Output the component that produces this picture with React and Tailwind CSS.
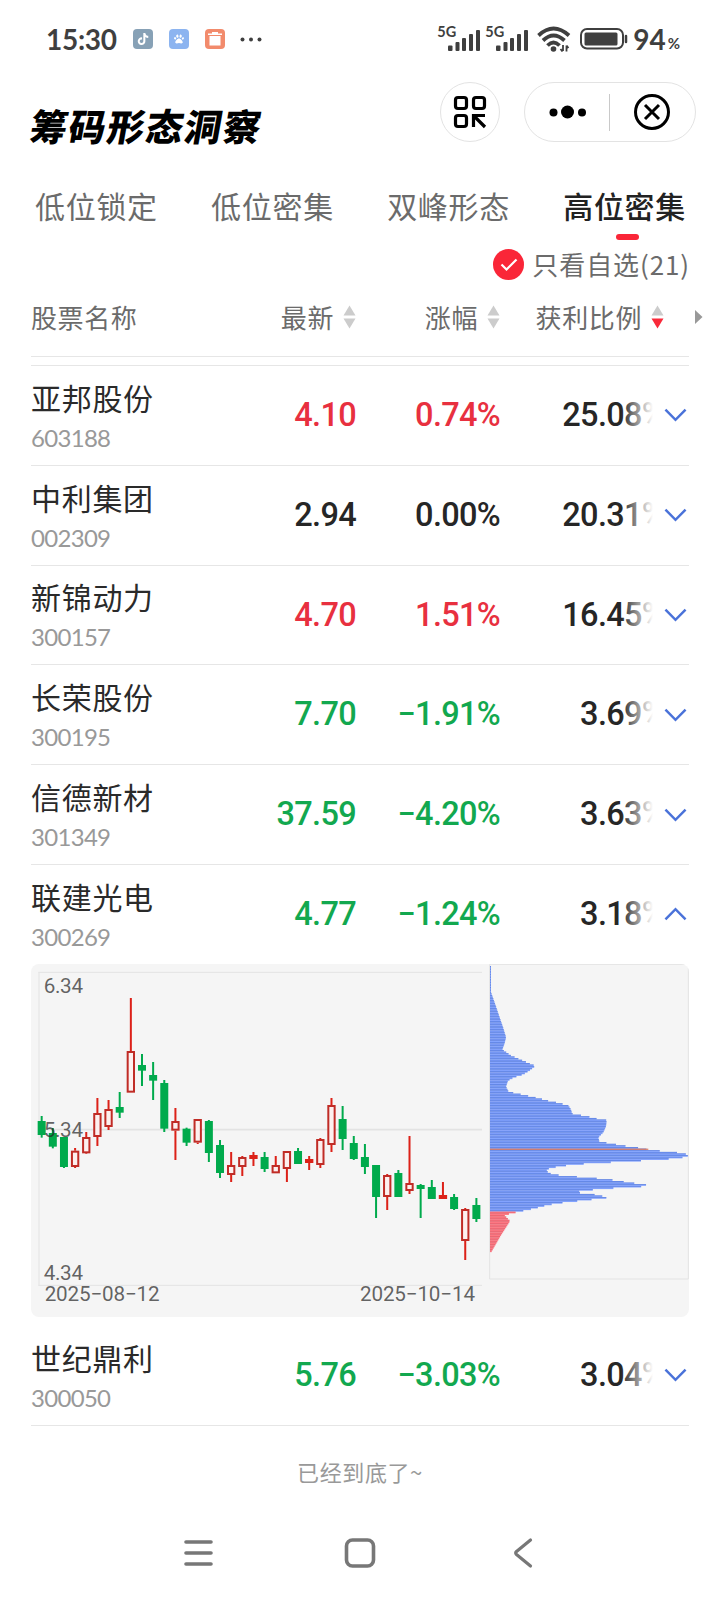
import React from "react";
import { FaPaw } from "react-icons/fa";
import { FaTiktok } from "react-icons/fa6";

const tabs = ["低位锁定", "低位密集", "双峰形态", "高位密集"];

const columns = [
  { label: "最新", width: "w-[189px]" },
  { label: "涨幅", width: "w-[144px]" },
  { label: "获利比例", width: "w-[164px]", sorted: true },
];

const stocks = [
  { name: "亚邦股份", code: "603188", price: "4.10", change: "0.74%", profit: "25.08%", tone: "up" },
  { name: "中利集团", code: "002309", price: "2.94", change: "0.00%", profit: "20.31%", tone: "flat" },
  { name: "新锦动力", code: "300157", price: "4.70", change: "1.51%", profit: "16.45%", tone: "up" },
  { name: "长荣股份", code: "300195", price: "7.70", change: "−1.91%", profit: "3.69%", tone: "down" },
  { name: "信德新材", code: "301349", price: "37.59", change: "−4.20%", profit: "3.63%", tone: "down" },
  { name: "联建光电", code: "300269", price: "4.77", change: "−1.24%", profit: "3.18%", tone: "down", open: true },
  { name: "世纪鼎利", code: "300050", price: "5.76", change: "−3.03%", profit: "3.04%", tone: "down" },
];

const tones = {
  up: "text-[#e8303f]",
  flat: "text-[#262626]",
  down: "text-[#12a84f]",
};

// [direction, high, body top, body bottom, low], three units to a pixel
const candles = [
  ["g", 483, 498, 540, 548], ["g", 519, 534, 575, 580], ["g", 546, 546, 636, 639], ["r", 579, 587, 636, 639],
  ["r", 531, 546, 595, 597], ["r", 429, 474, 546, 573], ["r", 435, 462, 516, 525], ["g", 411, 456, 473, 489],
  ["r", 129, 288, 413, 413], ["g", 297, 330, 347, 393], ["g", 321, 360, 377, 435], ["g", 375, 384, 521, 531],
  ["r", 459, 498, 527, 615], ["g", 518, 521, 563, 573], ["r", 492, 492, 563, 567], ["g", 495, 498, 594, 621],
  ["g", 555, 570, 654, 669], ["r", 591, 630, 660, 681], ["r", 603, 606, 636, 663], ["r", 591, 600, 612, 633],
  ["g", 591, 606, 642, 651], ["r", 603, 630, 655, 655], ["r", 588, 588, 642, 681], ["g", 579, 588, 627, 627],
  ["r", 603, 612, 624, 645], ["r", 549, 552, 630, 639], ["r", 429, 450, 570, 591], ["g", 453, 492, 552, 585],
  ["g", 543, 564, 612, 615], ["g", 567, 606, 636, 657], ["g", 630, 630, 726, 789], ["r", 657, 660, 726, 765],
  ["g", 645, 654, 726, 726], ["r", 543, 684, 708, 717], ["g", 687, 690, 702, 789], ["g", 675, 696, 732, 732],
  ["r", 681, 720, 732, 732], ["g", 717, 726, 762, 765], ["r", 759, 762, 858, 915], ["g", 729, 750, 792, 801],
];

// outline of the chip distribution: [y, bar length]
const outline = [
  [33, 3], [110, 3], [150, 17], [180, 27], [215, 39], [245, 48], [262, 44], [282, 37], [300, 63], [315, 98],
  [331, 136], [345, 118], [357, 98], [365, 72], [375, 54], [393, 48], [407, 55], [412, 72], [417, 96], [422, 119],
  [427, 142], [436, 176], [442, 206], [450, 235], [462, 243], [474, 246], [479, 272], [484, 298], [489, 320],
  [494, 350], [512, 348], [530, 340], [545, 325], [558, 328], [563, 357], [568, 387], [573, 416], [578, 460],
  [583, 475], [588, 534], [593, 583], [600, 595], [606, 575], [611, 528], [616, 434], [621, 341], [626, 260],
  [631, 215], [638, 178], [646, 168], [656, 186], [660, 216], [664, 267], [669, 328], [674, 375], [679, 407],
  [684, 440], [688, 470], [693, 452], [698, 360], [703, 300], [708, 261], [712, 270], [717, 315], [721, 334],
  [726, 354], [731, 308], [736, 264], [741, 218], [747, 178], [753, 154], [759, 130], [764, 106], [769, 83],
  [773, 62], [780, 44], [796, 60], [840, 32], [892, 2],
];

function lengthAt(y) {
  const i = outline.findIndex(([py]) => py >= y);
  if (i <= 0) return outline[0][1];
  const [y0, w0] = outline[i - 1];
  const [y1, w1] = outline[i];
  return w0 + ((w1 - w0) * (y - y0)) / (y1 - y0);
}

const bars = Array.from({ length: 177 }, (_, i) => {
  const y = 33 + i * 4.85;
  return { y, length: lengthAt(y) };
});

function StatusBar() {
  return (
    <div className="flex h-[78px] items-center pl-[46px] pr-[40px] font-['Lato',sans-serif] font-bold text-[#3f3f3f]">
      <span className="w-[71px] text-[28px] leading-none tracking-[-0.3px]">15:30</span>
      <span className="ml-4 flex size-5 items-center justify-center rounded bg-[#87a1b6] text-white">
        <FaTiktok size={12} />
      </span>
      <span className="ml-4 flex size-5 items-center justify-center rounded bg-[#8cb4f0] text-white">
        <FaPaw size={10} />
      </span>
      <span className="ml-4 flex size-5 items-center justify-center rounded bg-[#f28b6c]">
        <svg width="14" height="14" viewBox="0 0 14 14" fill="#fff">
          <path d="M4 0h6v1.5h4V3H0V1.5h4zM1.5 4h11v9.5h-11z" />
        </svg>
      </span>
      <svg className="ml-[15px]" width="23" height="5" viewBox="0 0 23 5" fill="#3f3f3f">
        <circle cx="2.5" cy="2.5" r="2" />
        <circle cx="11" cy="2.5" r="2" />
        <circle cx="19.5" cy="2.5" r="2" />
      </svg>
      <div className="ml-auto flex items-center">
        <Signal />
        <Signal />
        <svg className="ml-[4px]" width="34" height="26" viewBox="0 0 34 26" fill="none" stroke="#3f3f3f" strokeWidth="3.8">
          <path d="M1.5 9.5Q16.5 -4.5 32 9.5" />
          <path d="M6 14.5Q16.5 4.5 27.5 14.5" />
          <path d="M10.5 19.500Q16.5 13.500 22.5 19.500" />
          <circle cx="16.5" cy="23" r="2.8" fill="#3f3f3f" stroke="none" />
          <path d="M26 19v6M23.5 23l2 2.5M29.5 25.500v-6M31.5 22l-2-2.5" strokeWidth="1.8" />
        </svg>
        <svg className="ml-[9px]" width="48" height="22" viewBox="0 0 48 22" fill="none">
          <rect x="1" y="1" width="42" height="19.5" rx="6" stroke="#3f3f3f" strokeWidth="2" />
          <rect x="4.5" y="4.5" width="33" height="13" rx="1.5" fill="#3f3f3f" />
          <path d="M46 8v6" stroke="#3f3f3f" strokeWidth="2.5" strokeLinecap="round" />
        </svg>
        <span className="ml-[5px] text-[28px] leading-none">94</span>
        <span className="ml-[2px] pt-[8px] text-[15px] leading-none">%</span>
      </div>
    </div>
  );
}

function Signal() {
  return (
    <div className="flex w-[48px] items-start">
      <span className="w-[11px] text-[14.5px] leading-[8px]">5G</span>
      <svg className="mt-[2px]" width="33" height="21" viewBox="0 0 33 21" fill="#3f3f3f">
        <rect x="0" y="15.5" width="4.5" height="5.5" rx="1" />
        <rect x="7.5" y="12" width="4" height="9" rx="1" />
        <rect x="14" y="8" width="4" height="13" rx="1" />
        <rect x="21" y="4" width="4" height="17" rx="1" />
        <rect x="28" y="0" width="4" height="21" rx="1" />
      </svg>
    </div>
  );
}

function TitleBar() {
  return (
    <header className="flex h-[96px] items-start pl-[31px] pr-[24px]">
      <h1 className="mt-[24px] -skew-x-10 text-[37px] font-black leading-[46px] tracking-[1.6px] text-black">
        筹码形态洞察
      </h1>
      <div className="ml-auto mt-1 flex size-[60px] items-center justify-center rounded-full border border-[#e3e3e3]">
        <svg width="34" height="34" viewBox="0 0 34 34" fill="none" stroke="#000" strokeWidth="3.2">
          <rect x="2.5" y="2.5" width="11" height="11" rx="2.5" />
          <rect x="20.5" y="2.5" width="11" height="11" rx="2.5" />
          <rect x="2.5" y="20.5" width="11" height="11" rx="2.5" />
          <path d="M32 20.5H20.5V32M21 21l11 11" />
        </svg>
      </div>
      <div className="ml-6 mt-1 flex h-[60px] w-[172px] items-center rounded-full border border-[#e3e3e3]">
        <svg className="ml-6" width="38" height="14" viewBox="0 0 38 14">
          <circle cx="4.5" cy="7.5" r="4" />
          <circle cx="18.5" cy="7" r="6.5" />
          <circle cx="33" cy="7.5" r="4" />
        </svg>
        <div className="ml-[22px] h-[37px] w-px bg-[#c9c9c9]" />
        <svg className="ml-6" width="36" height="36" viewBox="0 0 36 36" fill="none" stroke="#000" strokeWidth="3">
          <circle cx="18" cy="18" r="16.5" />
          <path d="M11 11l14 14M25 11L11 25" />
        </svg>
      </div>
    </header>
  );
}

function SortArrows({ sorted }) {
  return (
    <svg width="13" height="24" viewBox="0 0 13 24">
      <path d="M6.5 0.5L12.5 10.5H0.5z" fill="#cccccc" />
      <path d="M6.5 23.5L12.5 13.5H0.5z" fill={sorted ? "#f92a3a" : "#cccccc"} />
    </svg>
  );
}

function StockRow({ stock }) {
  const last = stock.code === "300050";
  return (
    <div
      className={`flex items-center ${stock.open ? "h-[98.8px]" : "h-[99.8px] border-b border-[#e6e6e6]"} ${last ? "mt-[9px]" : ""}`}
    >
      <div className="w-[160px]">
        <div className="text-[30px] leading-[36px] tracking-[0.7px] text-[#2a2a2a]">{stock.name}</div>
        <div className="mt-[9px] font-['Lato',sans-serif] text-[24px] leading-[28px] tracking-[-0.7px] text-[#999999]">
          {stock.code}
        </div>
      </div>
      <div className="flex flex-1 items-center font-['Roboto',sans-serif] text-[32.5px] font-medium tracking-[-0.7px]">
        <span className={`w-[165px] text-right ${tones[stock.tone]}`}>{stock.price}</span>
        <span className={`w-[144px] text-right ${tones[stock.tone]}`}>{stock.change}</span>
        <div className="relative ml-auto flex h-10 w-[118px] items-center justify-end text-[#262626]">
          <span>{stock.profit}</span>
          <span className="absolute inset-y-0 right-[12px] w-[32px] bg-linear-to-r from-white/0 to-white" />
          <span className="absolute inset-y-0 -right-1 w-[16px] bg-white" />
        </div>
        <svg
          className="relative mr-[2px] -ml-[1px]"
          width="23"
          height="14"
          viewBox="0 0 24 14"
          fill="none"
          stroke="#4a72d9"
          strokeWidth="2.6"
        >
          <path d={stock.open ? "M1.5 12.5L12 2l10.5 10.5" : "M1.5 1.5L12 12 22.5 1.5"} />
        </svg>
      </div>
    </div>
  );
}

function Candle({ index, data }) {
  const [dir, high, top, bottom, low] = data;
  const x = 65 + index * 33.44;
  if (dir === "g") {
    return (
      <g fill="#00aa4c">
        <rect x={x - 3} y={high} width="6" height={low - high} />
        <rect x={x - 12} y={top} width="24" height={bottom - top} />
      </g>
    );
  }
  const hollow = bottom - top > 14;
  return (
    <g>
      <g fill="#dc2118">
        <rect x={x - 3} y={high} width="6" height={top - high} />
        <rect x={x - 3} y={bottom} width="6" height={low - bottom} />
      </g>
      <rect
        x={x - 9.5}
        y={top + 3}
        width="19"
        height={Math.max(bottom - top - 6, 1)}
        fill={hollow ? "#fdf0ef" : "#dc2118"}
        stroke={hollow ? "#c02c26" : "#dc2118"}
        strokeWidth="6"
      />
    </g>
  );
}

function ChipChart() {
  return (
    <svg
      className="block h-[353px] w-full rounded-lg bg-[#f5f5f5] font-['Roboto',sans-serif]"
      viewBox="33 27 1974 1059"
      preserveAspectRatio="none"
    >
      <g fill="none" stroke="#e3e3e3" strokeWidth="3">
        <path d="M55 52H1386M57 52V991M55 991H1386" />
        <path d="M55 524H1386" strokeWidth="5" />
        <path d="M1409 28H2005V972H1409z" />
      </g>
      {candles.map((data, i) => (
        <Candle key={i} index={i} data={data} />
      ))}
      {bars.map(({ y, length }) => (
        <g key={y}>
          <rect x="1410" y={y} width={length} height="4.85" fill={y > 769 ? "#ff7883" : "#85a4ff"} />
          <rect x="1410" y={y} width={length} height="1.8" fill={y > 769 ? "#dd5c68" : "#4f76d8"} />
        </g>
      ))}
      <rect x="1410" y="581" width="475" height="3.5" fill="#e07a5a" />
      <g fill="#222222" fillOpacity="0.7" fontSize="62">
        <text x="71" y="115" textLength="118">6.34</text>
        <text x="71" y="546" textLength="118">5.34</text>
        <text x="71" y="976" textLength="118">4.34</text>
        <text x="74" y="1039" textLength="345">2025−08−12</text>
        <text x="1020" y="1039" textLength="345">2025−10−14</text>
      </g>
    </svg>
  );
}

function NavBar() {
  return (
    <nav className="flex h-[80px] items-center">
      <svg width="720" height="34" viewBox="0 0 720 34" fill="none" stroke="#777777" strokeWidth="3.6" strokeLinecap="round">
        <path d="M186 6h25M186 17h25M186 28h25" />
        <rect x="346.5" y="4" width="27" height="26" rx="6" />
        <path d="M530.5 4L516.5 15.5q-1.5 1.5 0 3L530.5 30" strokeLinejoin="round" strokeWidth="3.2" />
      </svg>
    </nav>
  );
}

export default function App() {
  return (
    <div className="flex h-[1600px] w-[720px] flex-col overflow-hidden bg-white font-['Noto_Sans_CJK_SC',sans-serif]">
      <StatusBar />
      <TitleBar />
      <div className="flex justify-between pl-[35px] pr-[34px] pt-[11px] text-[30px] leading-[40px] tracking-[0.7px] text-[#6b6b6b]">
        {tabs.map((tab, i) => (
          <div key={tab} className={`flex h-[55px] flex-col items-center ${i === 3 ? "font-medium text-[#222222]" : ""}`}>
            {tab}
            {i === 3 && <span className="ml-[6px] mt-[9px] h-[6px] w-[23px] rounded-sm bg-[#fa2638]" />}
          </div>
        ))}
      </div>
      <div className="mt-[7px] flex h-[34px] items-center justify-end pr-[30px] text-[26px] leading-[34px] text-[#6b6b6b]">
        <svg className="mr-[8px]" width="31" height="31" viewBox="0 0 31 31" fill="none">
          <circle cx="15.5" cy="15.5" r="15.5" fill="#fa2638" />
          <path d="M8.5 15.5l5 5 10-10" stroke="#fff" strokeWidth="2.2" />
        </svg>
        <span className="tracking-[0.9px]">只看自选(21)</span>
      </div>
      <div className="flex h-[75px] shrink-0 items-center pb-[4px] pl-[31px] pr-[17px] text-[26px] leading-[34px] tracking-[0.6px] text-[#6b6b6b]">
        <span className="w-[136px] whitespace-nowrap">股票名称</span>
        {columns.map((col) => (
          <span key={col.label} className={`flex items-center justify-end gap-[9px] ${col.width}`}>
            {col.label}
            <SortArrows sorted={col.sorted} />
          </span>
        ))}
        <svg className="ml-auto" width="8" height="14" viewBox="0 0 8 14" fill="#999999">
          <path d="M0 0l7.5 7L0 14z" />
        </svg>
      </div>
      <main className="mx-[31px]">
        <div className="h-[10px] border-y border-[#e6e6e6]" />
        {stocks.map((stock) => (
          <React.Fragment key={stock.code}>
            <StockRow stock={stock} />
            {stock.open && <ChipChart />}
          </React.Fragment>
        ))}
      </main>
      <p className="mt-[28px] text-center text-[22px] leading-[34px] tracking-[0.6px] text-[#999999]">已经到底了~</p>
      <div className="mt-auto pb-[7px]">
        <NavBar />
      </div>
    </div>
  );
}
